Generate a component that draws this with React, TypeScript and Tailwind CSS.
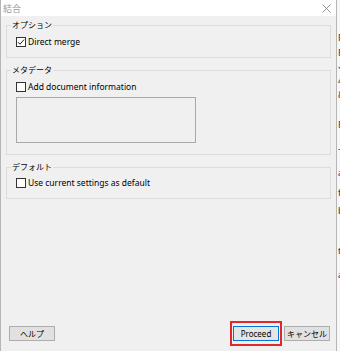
import { ReactNode } from "react";

const jp = { fontFamily: '"Segoe UI", "Noto Sans", "Noto Sans CJK JP", sans-serif' };

const Checkbox = ({ checked, label }: { checked?: boolean; label: string }) => (
  <div className="flex items-center h-[14px] gap-[2px]">
    <span className="w-[10px] h-[10px] border border-[#333] bg-white flex items-center justify-center">
      {checked && (
        <svg width="8" height="8" viewBox="0 0 8 8">
          <path d="M1 4.2 L3 6.2 L7 1.6" fill="none" stroke="#222" strokeWidth="1" />
        </svg>
      )}
    </span>
    <span className="text-[8.5px] leading-none text-black">{label}</span>
  </div>
);

const Group = ({ title, children, className }: { title: string; children: ReactNode; className: string }) => (
  <fieldset className={`border border-[#dcdcdc] mx-[5px] px-[9px] ${className}`}>
    <legend className="-ml-[5px] px-[1px] text-[8px] leading-[12px] text-black">{title}</legend>
    {children}
  </fieldset>
);

const Button = ({ label, primary }: { label: string; primary?: boolean }) => (
  <button
    className={`w-[46px] h-[15px] text-[8px] leading-none text-black flex items-center justify-center ${
      primary ? "border border-[#0078d7] bg-[#e5e5e5]" : "border border-[#adadad] bg-[#e1e1e1]"
    }`}
  >
    {label}
  </button>
);

const App = () => {
  const bgLetters = [
    ["F", "mt-[33px]"],
    ["F", "mt-[5px]"],
    ["<", "mt-[5px]"],
    ["4", "mt-[3px]"],
    ["&", "mt-[4px]"],
    ["F", "mt-[20px]"],
    ["-", "mt-[14px]"],
    ["a", "mt-[14px]"],
    ["f", "mt-[10px]"],
    ["b", "mt-[8px]"],
    ["t", "mt-[30px]"],
    ["a", "mt-[14px]"],
  ];

  return (
    <div className="flex w-[340px] h-[351px] overflow-hidden bg-white" style={jp}>
      <div className="w-[337px] shrink-0 h-full flex flex-col bg-[#f0f0f0] border-l border-r border-[#b5b5b5]">
        <div className="h-[16px] bg-white flex items-center justify-between pl-[2px] pr-[5px]">
          <span className="text-[9px] leading-none text-[#9a9a9a]">結合</span>
          <svg width="9" height="9" viewBox="0 0 9 9">
            <path d="M0.5 0.5 L8.5 8.5 M8.5 0.5 L0.5 8.5" stroke="#777" strokeWidth="0.8" />
          </svg>
        </div>

        <Group title="オプション" className="mt-[3px] pt-[4px] pb-[8px]">
          <Checkbox checked label="Direct merge" />
        </Group>

        <Group title="メタデータ" className="mt-[6px] pt-[4px] pb-[11px]">
          <Checkbox label="Add document information" />
          <div className="mt-[3px] w-[180px] h-[46px] border border-[#a9a9a9] bg-[#f0f0f0]" />
        </Group>

        <Group title="デフォルト" className="mt-[6px] pt-[3px] pb-[8px]">
          <Checkbox label="Use current settings as default" />
        </Group>

        <div className="mt-auto mb-[5px] flex items-center pl-[8px] pr-[6px]">
          <Button label="ヘルプ" />
          <div className="ml-auto border-2 border-[#e5252a] px-[1px] py-[3px]">
            <Button label="Proceed" primary />
          </div>
          <div className="ml-[2px]">
            <Button label="キャンセル" />
          </div>
        </div>
      </div>
      <div className="flex-1 min-w-0 overflow-hidden flex flex-col bg-[#f7f7f7]">
        {bgLetters.map(([ch, mt], i) => (
          <span key={i} className={`${mt} text-[9px] leading-[10px] text-[#333] ml-[1px]`}>
            {ch}
          </span>
        ))}
      </div>
    </div>
  );
};

export default App;
